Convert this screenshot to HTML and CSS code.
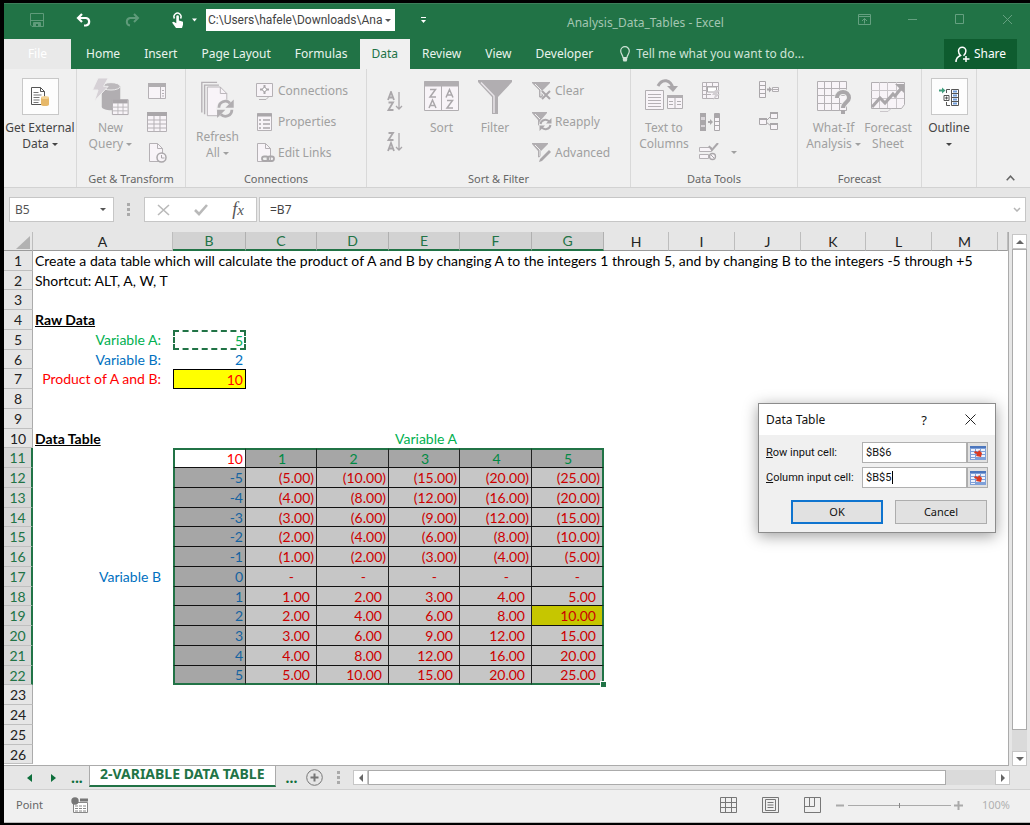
FILE: index.html
```html
<!DOCTYPE html>
<html lang="en">
<head>
<meta charset="utf-8">
<title>Analysis_Data_Tables - Excel</title>
<link rel="stylesheet" href="styles.css">
</head>
<body>
<div class="app">
  <header class="titlebar">
    <div class="quick">
      <button class="qbtn dim" aria-label="Save"><svg width="14" height="14" viewBox="0 0 14 14"><path d="M.5.5h13v13H2L.5 12z" fill="none" stroke="currentColor"/><path d="M1 7.500h12M3.500 13V9.500h7V13" fill="none" stroke="currentColor"/><path d="M4 10h6v3H8v-2H6v2H4z" fill="currentColor"/></svg></button>
      <button class="qbtn" aria-label="Undo"><svg width="16" height="14" viewBox="0 0 16 14"><path d="M6 1 2 5l4 4M2.500 5H10a3.800 3.800 0 0 1 0 7.500H8" fill="none" stroke="currentColor" stroke-width="2.200"/></svg></button>
      <button class="qbtn dim" aria-label="Redo"><svg width="16" height="14" viewBox="0 0 16 14"><path d="m10 1 4 4-4 4M13.500 5H6a3.800 3.800 0 0 0 0 7.500" fill="none" stroke="currentColor" stroke-width="2"/></svg></button>
      <button class="qbtn touch" aria-label="Touch mode"><svg width="26" height="16" viewBox="0 0 26 16"><path d="M2.500 6.500a3.500 3.500 0 1 1 6 0" fill="none" stroke="currentColor" stroke-width="1.500"/><path d="M4.300 4.500a1.300 1.300 0 0 1 2.600 0v4l4.100 1.200v3L10 16H4L0 10.500l1.700-.8 2.600 1.500z" fill="currentColor"/><path d="M20 6.500h5l-2.500 3z" fill="currentColor"/></svg></button>
      <span class="pathbox"><select class="path" aria-label="Document location"><option>C:\Users\hafele\Downloads\Ana</option></select><i class="caret"></i></span>
      <button class="qbtn more" aria-label="Customize toolbar"><svg width="5" height="6" viewBox="0 0 5 6"><path d="M0 .5h5" stroke="currentColor"/><path d="M0 3h5L2.500 6z" fill="currentColor"/></svg></button>
    </div>
    <h1 class="doc">Analysis_Data_Tables - Excel</h1>
    <div class="win">
      <button class="qbtn" aria-label="Ribbon display options"><svg width="13" height="11" viewBox="0 0 13 11"><path d="M.5.5h12v10H.5zM.5 2.500h12M6.500 9.500v-5M4 7l2.500-2.500L9 7" fill="none" stroke="currentColor"/></svg></button>
      <button class="qbtn" aria-label="Minimize"><svg width="10" height="11" viewBox="0 0 10 11"><path d="M0 5.500h9" stroke="currentColor"/></svg></button>
      <button class="qbtn" aria-label="Maximize"><svg width="10" height="11" viewBox="0 0 10 11"><path d="M.5.5h8v9h-8z" fill="none" stroke="currentColor"/></svg></button>
      <button class="qbtn" aria-label="Close"><svg width="11" height="11" viewBox="0 0 11 11"><path d="m1 1 9 9M10 1l-9 9" stroke="currentColor"/></svg></button>
    </div>
  </header>

  <nav class="tabs">
    <button class="tab file">File</button>
    <button class="tab">Home</button>
    <button class="tab">Insert</button>
    <button class="tab">Page Layout</button>
    <button class="tab">Formulas</button>
    <button class="tab active">Data</button>
    <button class="tab">Review</button>
    <button class="tab">View</button>
    <button class="tab">Developer</button>
    <button class="tab tell"><svg width="10" height="16" viewBox="0 0 10 16"><path d="M3 11.500C3 9 .7 8 .7 5a4.300 4.300 0 0 1 8.600 0C9.300 8 7 9 7 11.500z" fill="none" stroke="currentColor" stroke-width="1.200"/><path d="M2.800 12h4.400v2L6.500 15.500h-3L2.800 14z" fill="currentColor"/></svg>Tell me what you want to do...</button>
    <button class="share"><svg width="15" height="17" viewBox="0 0 15 17"><path d="M1 16c0-4 2-5.500 4.500-6.500C4 8 3.500 6.500 3.500 5a3.700 3.700 0 0 1 7.400 0c0 2-1 3.500-2.400 4.700M11 10v6M8 13h6.500" fill="none" stroke="currentColor" stroke-width="1.500"/></svg>Share</button>
  </nav>

  <section class="ribbon" aria-label="Data ribbon">
    <div class="group g-ext">
      <div class="gbody">
        <button class="big on"><span class="frame"><svg width="20" height="22" viewBox="0 0 20 22"><path d="M1.500 1.500h9l4 4v13h-13z" fill="#fff" stroke="#555"/><path d="M10.500 1.500v4h4" fill="none" stroke="#555"/><path d="M3.500 6.500h5M3.500 9h8M3.500 11.500h6M3.500 14h6M3.500 16.500h5" stroke="#777"/><path d="M11 11.500v7c0 2 8 2 8 0v-7z" fill="#e6b869"/><ellipse cx="15" cy="11.500" rx="4" ry="1.500" fill="#f3d294"/></svg></span><span>Get External<br>Data <i class="caret"></i></span></button>
      </div>
    </div>
    <div class="group g-trans">
      <div class="gbody">
        <button class="big"><svg width="40" height="40" viewBox="0 0 40 40"><path d="M10 9v22c0 5 20 5 20 0V9z" fill="#b1aeb1"/><ellipse cx="20" cy="9" rx="10" ry="4" fill="#bcb9bc" stroke="#f0f0f0"/><path d="M6 0h11l-5 9h5L2 25l4-12H0z" fill="#d6d1d6" stroke="#f0f0f0"/><path d="M21.500 23.500h17v16h-17z" fill="#f8f4f8" stroke="#a9a5a9"/><path d="M22 25.500h16" stroke="#a9a5a9" stroke-width="4"/><path d="M21 31.500h17M21 35.500h17M27.500 27v12M33 27v12" stroke="#bbb7bb"/></svg><span>New<br>Query <i class="caret"></i></span></button>
        <div class="stack icons">
          <button class="small" aria-label="Show Queries"><svg width="20" height="18" viewBox="0 0 20 18"><path d="M1.500 1.500h17v15h-17z" fill="#f8f4f8" stroke="#b5b1b5"/><path d="M1 3h18" stroke="#b1aeb1" stroke-width="4"/><path d="M13.500 5v11M15 8.500h2M15 11.500h2M15 14h2" stroke="#b5b1b5"/></svg></button>
          <button class="small" aria-label="From Table"><svg width="20" height="20" viewBox="0 0 20 20"><path d="M.5.5h19v19H.5z" fill="#f8f4f8" stroke="#b5b1b5"/><path d="M0 2h20" stroke="#aaa7aa" stroke-width="4"/><path d="M0 8h20M0 12h20M0 16h20M7 4v16M13 4v16" stroke="#b5b1b5"/></svg></button>
          <button class="small" aria-label="Recent Sources"><svg width="20" height="20" viewBox="0 0 20 20"><path d="M2.500.5h8l5 5v13h-13z" fill="#f8f4f8" stroke="#b5b1b5"/><path d="M10.500.5v5h5" fill="none" stroke="#b5b1b5"/><circle cx="14.500" cy="14.500" r="4.500" fill="#f8f4f8" stroke="#aaa7aa" stroke-width="1.500"/><path d="M14.500 12v3h3" fill="none" stroke="#aaa7aa"/></svg></button>
        </div>
      </div>
      <div class="glabel">Get &amp; Transform</div>
    </div>
    <div class="group g-conn">
      <div class="gbody">
        <button class="big tall"><svg width="38" height="40" viewBox="0 0 38 40"><path d="M1.500 34V1.500H18M4.500 36V4.500H20" fill="none" stroke="#b5b1b5" stroke-width="1.500"/><path d="M7.500 6.500h14l7 7v24h-21z" fill="#f8f4f8" stroke="#b5b1b5"/><path d="M21.500 6.500v7h7" fill="none" stroke="#b5b1b5"/><circle cx="27" cy="30" r="10" fill="#f0f0f0"/><path d="M20 29a7 7 0 0 1 12-5M34 31a7 7 0 0 1-12 5" fill="none" stroke="#b1aeb1" stroke-width="3"/><path d="M36 20v9h-9zM18 40v-9h9z" fill="#b1aeb1"/></svg><span>Refresh<br>All <i class="caret"></i></span></button>
        <div class="stack">
          <button class="small"><svg width="20" height="18" viewBox="0 0 20 18"><path d="M1.500 1.500h16v13h-16z" fill="#f8f4f8" stroke="#b5b1b5"/><path d="M9.500 3v9M5 7.500h9" stroke="#aaa7aa" stroke-width="2"/><circle cx="9.500" cy="7.500" r="2" fill="#fff" stroke="#aaa7aa"/><path d="M4 17.500h7l3-3" fill="none" stroke="#b5b1b5"/></svg>Connections</button>
          <button class="small"><svg width="20" height="18" viewBox="0 0 20 18"><path d="M2.500.5h14v17h-14z" fill="#f8f4f8" stroke="#b5b1b5"/><path d="M2 2h15" stroke="#aaa7aa" stroke-width="3"/><path d="M4 7h2M8 7h7M4 11h2M8 11h7M4 15h2M8 15h7" stroke="#aaa7aa" stroke-width="1.500"/></svg>Properties</button>
          <button class="small"><svg width="20" height="20" viewBox="0 0 20 20"><path d="M2.500.5h8l5 5v13h-13z" fill="#f8f4f8" stroke="#b5b1b5"/><path d="M10.500.5v5h5" fill="none" stroke="#b5b1b5"/><rect x="7" y="13.500" width="6.500" height="4.500" rx="2.200" fill="#f0f0f0" stroke="#aaa7aa" stroke-width="1.800"/><rect x="12.500" y="13.500" width="6.500" height="4.500" rx="2.200" fill="none" stroke="#aaa7aa" stroke-width="1.800"/></svg>Edit Links</button>
        </div>
      </div>
      <div class="glabel">Connections</div>
    </div>
    <div class="group g-sort">
      <div class="gbody">
        <div class="stack two">
          <button class="small" aria-label="Sort A to Z"><svg width="16" height="20" viewBox="0 0 16 20"><path d="m1 9 3-8 3 8M2 6.500h4M1.500 11.500H6L1.500 19h5" fill="none" stroke="#aaa7aa" stroke-width="1.800"/><path d="M12 1v17M9 15l3 3 3-3" fill="none" stroke="#aaa7aa" stroke-width="1.300"/></svg></button>
          <button class="small" aria-label="Sort Z to A"><svg width="16" height="20" viewBox="0 0 16 20"><path d="M1.500 1H6L1.500 8h5M1 19l3-8 3 8M2 16.500h4" fill="none" stroke="#aaa7aa" stroke-width="1.800"/><path d="M12 1v17M9 15l3 3 3-3" fill="none" stroke="#aaa7aa" stroke-width="1.300"/></svg></button>
        </div>
        <button class="big b-sort"><svg width="38" height="37" viewBox="0 0 38 37"><path d="M1.500 3.500h34v29h-34z" fill="#f8f4f8" stroke="#b1aeb1"/><path d="M1 6h35" stroke="#b1aeb1" stroke-width="5"/><path d="M18.500 8v24" stroke="#b1aeb1"/><path d="M7 11.500h5.500L7 19h6M6 30l3.500-8 3.500 8M7.500 27.500h4M23 19.500l3.500-8 3.500 8M24.500 17h4M24 22.500h5.500L24 30h6" fill="none" stroke="#aaa7aa" stroke-width="1.500"/></svg><span>Sort</span></button>
        <button class="big b-filter"><svg width="36" height="37" viewBox="0 0 36 37"><path d="M1 2h34v2L21 19v17h-6V19L1 4z" fill="#b1aeb1"/><path d="M4 4.500 17 18v17" fill="none" stroke="#e8e4e8" stroke-width="1.500"/></svg><span>Filter</span></button>
        <div class="stack">
          <button class="small"><svg width="20" height="18" viewBox="0 0 20 18"><path d="M0 0h18v1l-7 7v9l-4-2V8L0 1z" fill="#b1aeb1"/><path d="m3 2 6 6v6" fill="none" stroke="#f0f0f0"/><path d="m10 9 8 8M19 9l-9 9" stroke="#f0f0f0" stroke-width="4"/><path d="m10 9 8 8M18 9l-8 8" stroke="#aaa7aa" stroke-width="2"/></svg>Clear</button>
          <button class="small"><svg width="20" height="19" viewBox="0 0 20 19"><path d="M0 0h15v1L9 8v7l-3-2V8L0 1z" fill="#b1aeb1"/><path d="m3 2 5 5" stroke="#f0f0f0"/><circle cx="13.500" cy="12.500" r="6.500" fill="#f0f0f0"/><path d="M8.500 12a5 5 0 0 1 9-2M18.500 13a5 5 0 0 1-9 2" fill="none" stroke="#aaa7aa" stroke-width="2"/><path d="M19.500 6v5.500H14zM7.500 19v-5.500H13z" fill="#aaa7aa"/></svg>Reapply</button>
          <button class="small"><svg width="20" height="19" viewBox="0 0 20 19"><path d="M0 0h16v1l-7 7v8l-3-2V8L0 1z" fill="#b1aeb1"/><path d="m3 2 5 5v6" fill="none" stroke="#f0f0f0"/><path d="m7 18 11-11" stroke="#f0f0f0" stroke-width="5"/><path d="m8 16 9-9 2 2-9 9-3 1z" fill="#aaa7aa"/></svg>Advanced</button>
        </div>
      </div>
      <div class="glabel">Sort &amp; Filter</div>
    </div>
    <div class="group g-tools">
      <div class="gbody">
        <button class="big"><svg width="38" height="37" viewBox="0 0 38 37"><path d="M.5 12.500h18v19H.5z" fill="#f8f4f8" stroke="#b1aeb1"/><path d="M3 16.500h13M3 19.500h13M3 22.500h13M3 25.500h13M3 28.500h13" stroke="#b5b1b5"/><path d="M13 8c4-8 13-7 15 3" fill="none" stroke="#aaa7aa" stroke-width="3"/><path d="M22 8h11l-5 6z" fill="#aaa7aa"/><path d="M22.500 17.500h15v13h-15z" fill="#f8f4f8" stroke="#b1aeb1"/><path d="M22 18.500h16" stroke="#b1aeb1" stroke-width="3"/><path d="M30 20v11M24 23.500h4M32 23.500h4M24 26.500h4M32 26.500h4" stroke="#b1aeb1"/></svg><span>Text to<br>Columns</span></button>
        <div class="stack icons">
          <button class="small" aria-label="Flash Fill"><svg width="22" height="18" viewBox="0 0 22 18"><path d="M3.500.5h16v16h-16zM3 4.500h16M3 12.500h9M7.500 0v17M13.500 0v4M3 8.500h4" fill="#f8f4f8" stroke="#b5b1b5"/><path d="M8.500 5h9v5h-9z" fill="#fff" stroke="#aaa7aa"/><path d="M16 8h5l-3 4h3l-7 6 2-5h-3z" fill="#d2ced2"/></svg></button>
          <button class="small" aria-label="Remove Duplicates"><svg width="22" height="20" viewBox="0 0 22 20"><path d="M1 1h6v18H1z" fill="#aaa7aa"/><path d="M2 5h4v3H2zM2 13h4v2H2z" fill="#d9d5d9"/><path d="M9 10h4" stroke="#aaa7aa" stroke-width="2"/><path d="m11 7 3 3-3 3z" fill="#aaa7aa"/><path d="M15.500 1.500h5v17h-5zM15 5.500h6M15 9.500h6M15 13.500h6" fill="#f8f4f8" stroke="#aaa7aa"/><path d="M16 2h4v3h-4z" fill="#aaa7aa"/></svg></button>
          <button class="small" aria-label="Data Validation"><svg width="20" height="20" viewBox="0 0 20 20"><path d="M.5 4.500h12v4H.5zM.5 11.500h9v4H.5z" fill="#f8f4f8" stroke="#b5b1b5"/><path d="m10 3 3 4 6-7" fill="none" stroke="#aaa7aa" stroke-width="2"/><circle cx="13.500" cy="13.500" r="3" fill="#f8f4f8" stroke="#aaa7aa" stroke-width="1.300"/><path d="m11.500 11.500 4 4" stroke="#aaa7aa"/></svg></button>
        </div>
        <div class="stack dv"><span class="gap"></span><span class="gap"></span><button class="small" aria-label="Data Validation options"><i class="caret"></i></button></div>
        <div class="stack icons">
          <button class="small" aria-label="Consolidate"><svg width="22" height="20" viewBox="0 0 22 20"><path d="M1.500.5h6v16h-6zM1 4.500h6M1 8.500h6M1 12.500h6" fill="#f8f4f8" stroke="#aaa7aa"/><path d="M9 8.500h3" stroke="#aaa7aa" stroke-width="2"/><path d="m11 5.500 3 3-3 3z" fill="#aaa7aa"/><path d="M14.500 6.500h6v4h-6zM15 8.500h5" fill="#f8f4f8" stroke="#b1aeb1"/></svg></button>
          <button class="small" aria-label="Relationships"><svg width="20" height="20" viewBox="0 0 20 20"><path d="m8 9 5-5M8 10l5 4" stroke="#aaa7aa"/><path d="M1.500 6.500h7v6h-7zM12.500.5h7v6h-7zM12.500 11.500h7v6h-7z" fill="#f8f4f8" stroke="#aaa7aa"/><path d="M1 7h8M12 1h8M12 12h8" stroke="#aaa7aa" stroke-width="2"/></svg></button>
        </div>
      </div>
      <div class="glabel">Data Tools</div>
    </div>
    <div class="group g-fore">
      <div class="gbody">
        <button class="big"><svg width="36" height="37" viewBox="0 0 36 37"><path d="M1.500 3.500h29v29h-29z" fill="#f8f4f8" stroke="#b1aeb1"/><path d="M1 10.500h30M1 17.500h30M1 25.500h30M8.500 3v30M15.500 3v30M23.500 3v30" stroke="#b5b1b5"/><path d="M21 20c0-8 12-8 12 0 0 4-6 5-6 10" fill="none" stroke="#f0f0f0" stroke-width="6"/><path d="M21 20c0-8 12-8 12 0 0 4-6 5-6 10M27 32v4" fill="none" stroke="#aaa7aa" stroke-width="4"/></svg><span>What-If<br>Analysis <i class="caret"></i></span></button>
        <button class="big"><svg width="36" height="37" viewBox="0 0 36 37"><path d="M1.500 4.500h33v22l-3 4h-30z" fill="#f8f4f8" stroke="#b1aeb1"/><path d="M1 12.500h33M1 20.500h33M9.500 4v26M17.500 4v26M26.500 4v26M10 33.500h8l3-3" fill="none" stroke="#cac6ca"/><path d="m2 29 8-9 5 5 8-9 2 2L33 8" fill="none" stroke="#aaa7aa" stroke-width="3"/><path d="M25 6h9v9z" fill="#aaa7aa"/></svg><span>Forecast<br>Sheet</span></button>
      </div>
      <div class="glabel">Forecast</div>
    </div>
    <div class="group g-out">
      <div class="gbody">
        <button class="big on"><span class="frame"><svg width="22" height="20" viewBox="0 0 22 20"><path d="M1 3.500h5" stroke="#3f9d7c" stroke-width="2"/><path d="m4 .5 3.500 3L4 6.500z" fill="#3f9d7c"/><path d="M13.500 2.500h7v16h-7zM13 6.500h8M13 10.500h8M13 14.500h8" fill="#fff" stroke="#555"/><path d="M15 4.500h4M15 8.500h4M15 12.500h4M15 16.500h4" stroke="#6f9bd8" stroke-width="2"/><path d="M12 2.500H8.500V6M12 18.500H8.500V15M6 8.500h5v5H6zM7 11h3M8.500 9.500v3" fill="none" stroke="#555"/></svg></span><span>Outline<br><i class="caret"></i></span></button>
      </div>
    </div>
    <button class="collapse" aria-label="Collapse the ribbon"><svg width="9" height="6" viewBox="0 0 9 6"><path d="m.7 5.200 3.800-4 3.800 4" fill="none" stroke="#666" stroke-width="1.500"/></svg></button>
  </section>

  <section class="formula">
    <div class="namebox"><input value="B5" aria-label="Name box"><i class="caret"></i></div>
    <span class="dots" aria-hidden="true"></span>
    <div class="fbtns">
      <button aria-label="Cancel entry"><svg width="13" height="12" viewBox="0 0 13 12"><path d="m1 1 11 10M12 1 1 11" stroke="#b9b9b9" stroke-width="1.600"/></svg></button>
      <button aria-label="Enter"><svg width="14" height="12" viewBox="0 0 14 12"><path d="m1 6 4 4 8-9" fill="none" stroke="#b9b9b9" stroke-width="2.600"/></svg></button>
      <button class="fx" aria-label="Insert function"><em>f</em><em class="sub">x</em></button>
    </div>
    <div class="fbox"><input value="=B7" aria-label="Formula"><svg width="8" height="5" viewBox="0 0 8 5"><path d="m1 1 3 3 3-3" fill="none" stroke="#b5b5b5" stroke-width="1.500"/></svg></div>
  </section>

  <main class="work">
    <div class="sheetwrap">
      <table class="sheet">
        <colgroup><col class="w-h"><col class="w-a"><col class="w73"><col class="w71"><col class="w72"><col class="w71"><col class="w72"><col class="w72"><col class="w65"><col class="w66"><col class="w66"><col class="w65"><col class="w66"><col class="w66"><col></colgroup>
        <thead><tr><th class="corner"><svg width="14" height="13" viewBox="0 0 14 13"><path d="M14 0v13H0z" fill="#b2b2b2"/></svg></th><th>A</th><th class="hs">B</th><th class="hs">C</th><th class="hs">D</th><th class="hs">E</th><th class="hs">F</th><th class="hs">G</th><th>H</th><th>I</th><th>J</th><th>K</th><th>L</th><th>M</th><th></th></tr></thead>
        <tbody>
          <tr><th>1</th><td colspan="14">Create a data table which will calculate the product of A and B by changing A to the integers 1 through 5, and by changing B to the integers -5 through +5</td></tr>
          <tr><th>2</th><td colspan="2">Shortcut: ALT, A, W, T</td></tr>
          <tr><th>3</th></tr>
          <tr><th>4</th><td class="head">Raw Data</td></tr>
          <tr><th>5</th><td class="lab green">Variable A:</td><td class="num green ants">5</td></tr>
          <tr><th>6</th><td class="lab blue">Variable B:</td><td class="num blue">2</td></tr>
          <tr><th>7</th><td class="lab red">Product of A and B:</td><td class="num red yellow">10</td></tr>
          <tr><th>8</th></tr>
          <tr><th>9</th></tr>
          <tr><th>10</th><td class="head">Data Table</td><td></td><td class="mid green" colspan="5">Variable A</td></tr>
          <tr class="s top"><th>11</th><td></td><td class="k first">10</td><td class="c">1</td><td class="c">2</td><td class="c">3</td><td class="c">4</td><td class="c">5</td></tr>
          <tr class="s"><th>12</th><td></td><td class="k">-5</td><td class="n">(5.00)</td><td class="n">(10.00)</td><td class="n">(15.00)</td><td class="n">(20.00)</td><td class="n">(25.00)</td></tr>
          <tr class="s"><th>13</th><td></td><td class="k">-4</td><td class="n">(4.00)</td><td class="n">(8.00)</td><td class="n">(12.00)</td><td class="n">(16.00)</td><td class="n">(20.00)</td></tr>
          <tr class="s"><th>14</th><td></td><td class="k">-3</td><td class="n">(3.00)</td><td class="n">(6.00)</td><td class="n">(9.00)</td><td class="n">(12.00)</td><td class="n">(15.00)</td></tr>
          <tr class="s"><th>15</th><td></td><td class="k">-2</td><td class="n">(2.00)</td><td class="n">(4.00)</td><td class="n">(6.00)</td><td class="n">(8.00)</td><td class="n">(10.00)</td></tr>
          <tr class="s"><th>16</th><td></td><td class="k">-1</td><td class="n">(1.00)</td><td class="n">(2.00)</td><td class="n">(3.00)</td><td class="n">(4.00)</td><td class="n">(5.00)</td></tr>
          <tr class="s"><th>17</th><td class="lab blue">Variable B</td><td class="k">0</td><td class="z">-</td><td class="z">-</td><td class="z">-</td><td class="z">-</td><td class="z">-</td></tr>
          <tr class="s"><th>18</th><td></td><td class="k">1</td><td class="p">1.00</td><td class="p">2.00</td><td class="p">3.00</td><td class="p">4.00</td><td class="p">5.00</td></tr>
          <tr class="s"><th>19</th><td></td><td class="k">2</td><td class="p">2.00</td><td class="p">4.00</td><td class="p">6.00</td><td class="p">8.00</td><td class="p olive">10.00</td></tr>
          <tr class="s"><th>20</th><td></td><td class="k">3</td><td class="p">3.00</td><td class="p">6.00</td><td class="p">9.00</td><td class="p">12.00</td><td class="p">15.00</td></tr>
          <tr class="s"><th>21</th><td></td><td class="k">4</td><td class="p">4.00</td><td class="p">8.00</td><td class="p">12.00</td><td class="p">16.00</td><td class="p">20.00</td></tr>
          <tr class="s bottom"><th>22</th><td></td><td class="k">5</td><td class="p">5.00</td><td class="p">10.00</td><td class="p">15.00</td><td class="p">20.00</td><td class="p">25.00<span class="handle"></span></td></tr>
          <tr><th>23</th></tr>
          <tr><th>24</th></tr>
          <tr><th>25</th></tr>
          <tr><th>26</th></tr>
        </tbody>
      </table>
    </div>
    <div class="vscroll" aria-hidden="true"><span class="sb"><svg width="8" height="4" viewBox="0 0 8 4"><path d="M4 0l4 4H0z" fill="#666"/></svg></span><span class="vthumb"></span><span class="vtrack"></span><span class="sb"><svg width="8" height="4" viewBox="0 0 8 4"><path d="M0 0h8L4 4z" fill="#666"/></svg></span></div>
  </main>

  <div class="sheetbar">
    <div class="navs">
      <button aria-label="Previous sheet"><svg width="5" height="8" viewBox="0 0 5 8"><path d="M5 0v8L0 4z" fill="#0e6f3c"/></svg></button>
      <button aria-label="Next sheet"><svg width="5" height="8" viewBox="0 0 5 8"><path d="M0 0v8l5-4z" fill="#0e6f3c"/></svg></button>
      <button class="ell">...</button>
    </div>
    <button class="stab">2-VARIABLE DATA TABLE</button>
    <button class="ell after">...</button>
    <button class="plus" aria-label="New sheet"><svg width="17" height="17" viewBox="0 0 17 17"><circle cx="8.500" cy="8.500" r="7.800" fill="none" stroke="#777"/><path d="M8.500 4.500v8M4.500 8.500h8" stroke="#777" stroke-width="2"/></svg></button>
    <span class="dots" aria-hidden="true"></span>
    <div class="hscroll" aria-hidden="true"><span class="sb"><svg width="4" height="8" viewBox="0 0 4 8"><path d="M4 0v8L0 4z" fill="#666"/></svg></span><span class="hthumb"></span><span class="htrack"></span><span class="sb"><svg width="4" height="8" viewBox="0 0 4 8"><path d="M0 0v8l4-4z" fill="#666"/></svg></span></div>
  </div>

  <footer class="status">
    <span class="mode">Point</span>
    <button class="macro" aria-label="Record macro"><svg width="18" height="17" viewBox="0 0 18 17"><path d="M2.500 5.500h14v10h-14z" fill="#fff" stroke="#888"/><path d="M9 3h8" stroke="#777" stroke-width="3"/><circle cx="4" cy="4" r="3.700" fill="#777"/><path d="M4 9h3M8 9h3M12 9h3M4 11.500h3M8 11.500h3M12 11.500h3M4 14h3M8 14h3M12 14h3" stroke="#888"/></svg></button>
    <div class="views">
      <button aria-label="Normal view"><svg width="17" height="16" viewBox="0 0 17 16"><path d="M.5.5h16v15H.5zM.5 5.500h16M.5 10.500h16M5.500.5v15M11.500.5v15" fill="none" stroke="#777"/></svg></button>
      <button aria-label="Page layout view"><svg width="17" height="16" viewBox="0 0 17 16"><path d="M.5.5h16v15H.5zM3.500 2.500h10v11h-10z" fill="none" stroke="#777"/><path d="M5.500 5.500h6M5.500 8h6M5.500 10.500h6" stroke="#777"/></svg></button>
      <button aria-label="Page break view"><svg width="17" height="16" viewBox="0 0 17 16"><path d="M.5.5h16v15H.5zM.5 9.500h10v-9M5.500.5v9" fill="none" stroke="#777"/></svg></button>
    </div>
    <button class="zb" aria-label="Zoom out"><svg width="9" height="9" viewBox="0 0 9 9"><path d="M0 4.500h8" stroke="#aaa" stroke-width="2"/></svg></button>
    <input class="zoom" type="range" min="0" max="100" value="50" aria-label="Zoom">
    <button class="zb" aria-label="Zoom in"><svg width="9" height="9" viewBox="0 0 9 9"><path d="M0 4.500h9M4.500 0v9" stroke="#aaa" stroke-width="2"/></svg></button>
    <span class="pct">100%</span>
  </footer>

  <form class="dialog" role="dialog" aria-labelledby="dlg-title">
    <div class="dhead"><h2 id="dlg-title">Data Table</h2><button type="button" class="dq" aria-label="Help">?</button><button type="button" class="dx" aria-label="Close"><svg width="11" height="11" viewBox="0 0 11 11"><path d="m.5.5 10 10M10.500.5l-10 10" stroke="#222"/></svg></button></div>
    <div class="dbody">
      <div class="field"><label for="row-cell"><u>R</u>ow input cell:</label><input id="row-cell" value="$B$6"><button type="button" class="pick" aria-label="Select row cell"><svg width="16" height="14" viewBox="0 0 16 14"><path d="M0 0h16v14H0z" fill="#7fa0d8"/><path d="M0 0h16v2H0z" fill="#4b76bd"/><path d="M1 3h4v2H1zM6 3h4v2H6zM11 3h4v2h-4zM1 6h4v2H1zM11 6h4v2h-4zM1 9h4v2H1zM6 9h4v2H6zM11 9h4v2h-4zM1 12h4v1H1z" fill="#eef3fc"/><path d="m5 5 3 1 1-2 3 3-1 4-5-1 1-2-3-1z" fill="#dc3a20"/></svg></button></div>
      <div class="field"><label for="col-cell"><u>C</u>olumn input cell:</label><span class="caretbox"><input id="col-cell" value="$B$5"><span class="cursor"></span></span><button type="button" class="pick" aria-label="Select column cell"><svg width="16" height="14" viewBox="0 0 16 14"><path d="M0 0h16v14H0z" fill="#7fa0d8"/><path d="M0 0h16v2H0z" fill="#4b76bd"/><path d="M1 3h4v2H1zM6 3h4v2H6zM11 3h4v2h-4zM1 6h4v2H1zM11 6h4v2h-4zM1 9h4v2H1zM6 9h4v2H6zM11 9h4v2h-4zM1 12h4v1H1z" fill="#eef3fc"/><path d="m5 5 3 1 1-2 3 3-1 4-5-1 1-2-3-1z" fill="#dc3a20"/></svg></button></div>
      <div class="dbtns"><button type="button" class="ok">OK</button><button type="button">Cancel</button></div>
    </div>
  </form>
</div>
</body>
</html>
```
FILE: styles.css
```css
* { box-sizing: border-box; }
html, body { height: 100%; }
body { margin: 0; padding: 3px 0 2px 4px; background: #000; font: 12px/16px "Noto Sans", "Open Sans", sans-serif; color: #444; }
button, input, select { font: inherit; color: inherit; margin: 0; padding: 0; border: 0; border-radius: 0; background: none; }
svg { display: block; flex: none; }
.app { position: relative; display: flex; flex-direction: column; min-height: 100%; background: #e6e6e6; overflow: hidden; }
.caret { display: inline-block; vertical-align: middle; border: 3px solid transparent; border-top-color: currentColor; border-bottom: 0; }

.titlebar { display: flex; align-items: center; height: 36px; background: #217346; color: #fff; border-top: 1px solid #3d7f5b; }
.quick { display: flex; align-items: center; gap: 32px; padding: 0 0 3px 26px; }
.qbtn { display: flex; align-items: center; }
.dim { color: #5f9b7a; }
.pathbox { display: flex; align-items: center; width: 189px; height: 22px; margin-left: -24px; padding-right: 4px; background: #fff; color: #555; }
.path { appearance: none; flex: 1; min-width: 0; padding-left: 2px; color: #444; font-family: Roboto, "Noto Sans", sans-serif; }
.more { margin-left: -6px; }
.doc { flex: 1; margin: 2px 0 0; padding-left: 141px; font-size: 12px; font-weight: 400; color: #a3c6b2; white-space: nowrap; }
.win { display: flex; gap: 37px; padding: 0 17px 5px 0; color: #65a080; }

.tabs { display: flex; height: 30px; background: #217346; color: #fff; }
.tab { padding: 0 12px; white-space: nowrap; color: #e9f3ed; }
.file { width: 67px; margin-right: 3px; background: #e9e9e9; color: #fff; }
.active { background: #f0f0f0; color: #217346; }
.tell { display: flex; align-items: center; gap: 6px; margin-left: 3px; color: #cfe3d7; }
.share { display: flex; align-items: center; justify-content: center; gap: 4px; width: 73px; margin-left: auto; margin-right: 13px; background: #0e5c2f; }

.ribbon { display: flex; height: 119px; background: #f0f0f0; border-bottom: 1px solid #d2d2d2; color: #a0a0a0; }
.group { display: flex; flex-direction: column; flex: none; border-right: 1px solid #d9d9d9; }
.gbody { display: flex; height: 102px; }
.glabel { color: #666; font-size: 11px; text-align: center; white-space: nowrap; }
.big { display: flex; flex-direction: column; align-items: center; gap: 5px; padding-top: 9px; white-space: nowrap; }
.big > svg { height: 37px; overflow: visible; }
.big.tall { padding-top: 12px; gap: 11px; }
.big.on { color: #444; }
.frame { display: flex; align-items: center; justify-content: center; width: 37px; height: 37px; border: 1px solid #c8c8c8; background: #fdfdfd; }
.stack { display: flex; flex-direction: column; padding-top: 6px; }
.small { display: flex; align-items: center; gap: 3px; height: 31px; white-space: nowrap; }
.gap { height: 31px; }
.two { padding-top: 11px; }
.two .small { height: 41px; }
.g-ext { width: 73px; }
.g-ext .big { width: 72px; }
.g-trans { width: 109px; }
.g-trans .big { width: 67px; }
.g-trans .stack { padding-left: 3px; }
.g-conn { width: 181px; }
.g-conn .big { width: 63px; }
.g-conn .stack { padding-left: 6px; }
.g-sort { width: 264px; }
.g-sort .two { width: 46px; padding-left: 20px; }
.b-sort { width: 57px; }
.b-filter { width: 50px; }
.g-sort .stack:last-child { padding-left: 12px; }
.g-tools { width: 167px; }
.g-tools .big { width: 66px; }
.g-tools .icons { padding-left: 2px; }
.g-tools .dv { width: 35px; padding-left: 10px; }
.g-fore { width: 124px; }
.g-fore .gbody { padding-left: 6px; }
.g-fore .big { width: 59px; }
.g-fore .big + .big { width: 50px; }
.g-out { width: 55px; }
.g-out .big { width: 54px; }
.collapse { margin: auto 15px 6px auto; }

.formula { display: flex; align-items: center; height: 44px; padding: 0 4px 1px 5px; }
.namebox, .fbtns, .fbox { display: flex; align-items: center; height: 25px; background: #fff; border: 1px solid #c6c6c6; }
.namebox { width: 105px; padding: 0 7px 0 5px; color: #555; }
.namebox input { flex: 1; min-width: 0; }
.dots { width: 3px; height: 13px; margin: 0 14px 0 13px; background: repeating-linear-gradient(#aaa 0 3px, transparent 3px 5px); }
.fbtns { width: 113px; justify-content: space-around; color: #555; }
.fx { font: 18px/20px "Liberation Serif", serif; }
.fx .sub { font-size: 15px; }
.fbox { flex: 1; margin-left: 2px; padding: 0 4px 0 10px; }
.fbox input { flex: 1; min-width: 0; }

.work { display: flex; flex: 1; }
.sheetwrap { flex: 1; min-width: 0; overflow: hidden; background: linear-gradient(#e6e6e6 19px, #fff 19px); border-right: 1px solid #ababab; border-bottom: 1px solid #ababab; }
.sheet { width: 100%; table-layout: fixed; border-collapse: separate; border-spacing: 0; font: 14px/18px Lato, "Noto Sans", sans-serif; color: #000; }
.w-h { width: 29px; } .w-a { width: 140px; } .w73 { width: 73px; } .w72 { width: 72px; } .w71 { width: 71px; } .w66 { width: 66px; } .w65 { width: 65px; }
.sheet th, .sheet td { padding: 0; height: 20px; font-weight: 400; white-space: nowrap; overflow: visible; }
.sheet td { padding-left: 2px; }
.sheet tbody tr:nth-child(4n+2) > * { height: 19px; line-height: 17px; }
.sheet th { background: #e6e6e6; color: #222; border-right: 1px solid #ababab; border-bottom: 1px solid #bfbfbf; }
.sheet thead th { height: 19px; line-height: 17px; border-right-color: #bdbdbd; border-bottom-color: #9b9b9b; }
.sheet .corner svg { margin: 2px 0 0 12px; }
.sheet thead .hs { background: #d2d2d2; color: #217346; border-bottom: 2px solid #217346; border-right-color: #b0b0b0; line-height: 16px; }
.sheet .s th { background: #d8d8d8; color: #217346; border-right: 2px solid #217346; }
.sheet td.head { font-weight: 700; text-decoration: underline; }
.sheet td.lab { text-align: right; padding-right: 12px; }
.sheet td.num { text-align: right; padding-right: 3px; }
.mid { text-align: center; }
.green { color: #00b050; } .blue { color: #0070c0; } .red { color: #f00; }
.sheet td.yellow { background: #ff0; border: 1px solid #000; padding-right: 2px; line-height: 17px; }
.sheet td.ants { border: 2px dashed #217346; padding-right: 1px; line-height: 15px; }
.s .k, .s .c, .s .n, .s .z, .s .p { position: relative; border-right: 1px solid #222; border-bottom: 1px solid #111; background: #c6c6c6; color: #c00; text-align: right; line-height: 17px; }
.s .k { background: #a6a6a6; color: #1463a0; border-left: 2px solid #217346; padding-right: 2px; }
.s .c { background: #a6a6a6; color: #008a44; text-align: center; }
.s .first { background: #fff; color: #f00; }
.s .n { padding-right: 2px; }
.s .p { padding-right: 6px; }
.s .z { padding-right: 22px; }
.s .olive { background: #c6c600; }
.s td:last-child { border-right: 2px solid #217346; }
.top td:nth-child(n+3) { border-top: 2px solid #217346; line-height: 16px; }
.bottom td:nth-child(n+3) { border-bottom: 2px solid #217346; }
.handle { position: absolute; right: -4px; bottom: -4px; width: 6px; height: 6px; background: #217346; border: 1px solid #fff; border-width: 1px 0 0 1px; }

.sb { display: flex; align-items: center; justify-content: center; flex: none; width: 15px; height: 15px; background: #fff; border: 1px solid #c6c6c6; }
.vscroll { display: flex; flex-direction: column; width: 21px; padding: 2px 3px 0; }
.vthumb { flex: 1; background: #fff; border: 1px solid #ababab; }
.vtrack { height: 21px; background: #dadada; }

.sheetbar { display: flex; align-items: center; height: 24px; border-bottom: 1px solid #d0d0d0; color: #0e6f3c; }
.navs { display: flex; align-items: center; gap: 19px; width: 85px; padding-left: 23px; }
.ell { font-size: 14px; font-weight: 700; line-height: 16px; }
.navs .ell { margin-left: -4px; }
.stab { align-self: flex-start; height: 21px; padding: 0 10px 3px; background: #fff; border: 1px solid #ababab; border-width: 0 1px 2px; border-bottom-color: #217346; color: #217346; font-size: 14px; font-weight: 700; line-height: 16px; white-space: nowrap; }
.after { margin: 0 9px 0 10px; }
.sheetbar .dots { margin: 0 13px 0 14px; }
.hscroll { display: flex; flex: 1; margin-right: 20px; }
.hthumb { flex: 1; background: #fff; border: 1px solid #ababab; }
.htrack { width: 49px; background: #dadada; }

.status { display: flex; align-items: center; height: 33px; padding: 0 20px 2px 12px; background: #f0f0f0; border-bottom: 1px solid #bbb; font-size: 11px; color: #666; }
.macro { margin-left: 28px; }
.views { display: flex; gap: 25px; margin-left: auto; }
.views + .zb { margin-left: 15px; }
.zoom { appearance: none; width: 103px; height: 12px; margin: 0 3px; background: linear-gradient(#aaa, #aaa) no-repeat center / 100% 1px; }
.zoom::-webkit-slider-thumb { appearance: none; width: 1px; height: 5px; background: #888; }
.pct { margin-left: 19px; color: #b0b0b0; font-size: 11px; }

.dialog { position: absolute; left: 754px; top: 400px; width: 238px; background: #f0f0f0; border: 1px solid #8c8c8c; box-shadow: 0 3px 14px rgba(0, 0, 0, .38); color: #111; font-size: 11px; }
.dhead { display: flex; align-items: center; height: 31px; padding: 0 19px 0 7px; background: #fff; }
.dhead h2 { flex: 1; margin: 0; font-size: 12px; font-weight: 400; }
.dq { font-size: 13px; margin-right: 38px; }
.dbody { padding: 7px 7px 8px; }
.field { display: flex; align-items: center; height: 21px; margin-bottom: 4px; font-family: Roboto, "Noto Sans", sans-serif; }
.field label { flex: 1; white-space: nowrap; }
.field input { width: 105px; height: 21px; padding: 0 3px; background: #fff; border: 1px solid #b0b0b0; }
.caretbox { position: relative; display: flex; }
.cursor { position: absolute; left: 30px; top: 4px; width: 1px; height: 13px; background: #000; }
.pick { display: flex; align-items: center; justify-content: center; width: 21px; height: 21px; background: #e1e1e1; border: 1px solid #adadad; }
.dbtns { display: flex; justify-content: flex-end; gap: 12px; padding: 8px 1px 0 0; }
.dbtns button { width: 92px; height: 24px; background: #e1e1e1; border: 1px solid #adadad; }
.dbtns .ok { border: 2px solid #0f74cf; }
```
